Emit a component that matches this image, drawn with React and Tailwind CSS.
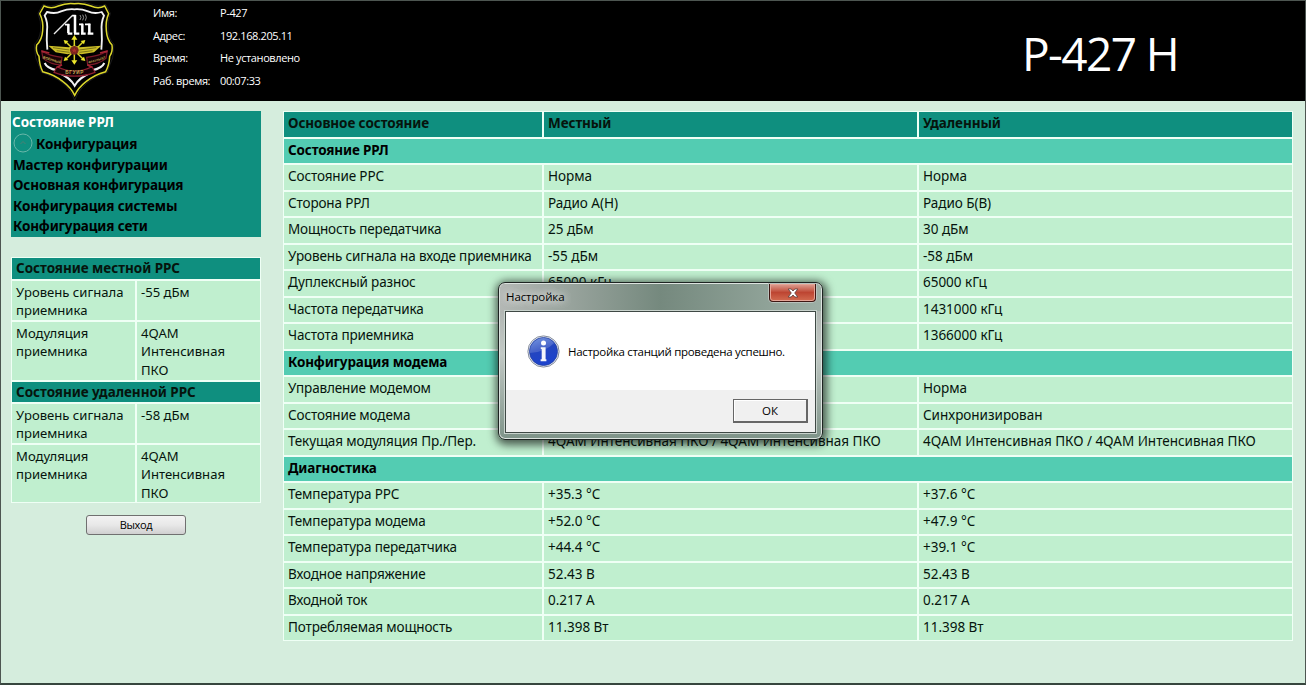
import React from "react";

const info = [
  ["Имя:", "Р-427"],
  ["Адрес:", "192.168.205.11"],
  ["Время:", "Не установлено"],
  ["Раб. время:", "00:07:33"],
];

const menu = ["Мастер конфигурации", "Основная конфигурация", "Конфигурация системы", "Конфигурация сети"];

const table = [
  { head: ["Основное состояние", "Местный", "Удаленный"] },
  { section: "Состояние РРЛ" },
  { cells: ["Состояние РРС", "Норма", "Норма"] },
  { cells: ["Сторона РРЛ", "Радио А(Н)", "Радио Б(В)"] },
  { cells: ["Мощность передатчика", "25 дБм", "30 дБм"] },
  { cells: ["Уровень сигнала на входе приемника", "-55 дБм", "-58 дБм"] },
  { cells: ["Дуплексный разнос", "65000 кГц", "65000 кГц"] },
  { cells: ["Частота передатчика", "1366000 кГц", "1431000 кГц"] },
  { cells: ["Частота приемника", "1431000 кГц", "1366000 кГц"] },
  { section: "Конфигурация модема" },
  { cells: ["Управление модемом", "Норма", "Норма"] },
  { cells: ["Состояние модема", "Синхронизирован", "Синхронизирован"] },
  { cells: ["Текущая модуляция Пр./Пер.", "4QAM Интенсивная ПКО / 4QAM Интенсивная ПКО", "4QAM Интенсивная ПКО / 4QAM Интенсивная ПКО"] },
  { section: "Диагностика" },
  { cells: ["Температура РРС", "+35.3 °C", "+37.6 °C"] },
  { cells: ["Температура модема", "+52.0 °C", "+47.9 °C"] },
  { cells: ["Температура передатчика", "+44.4 °C", "+39.1 °C"] },
  { cells: ["Входное напряжение", "52.43 В", "52.43 В"] },
  { cells: ["Входной ток", "0.217 А", "0.217 А"] },
  { cells: ["Потребляемая мощность", "11.398 Вт", "11.398 Вт"] },
];

function Emblem() {
  return (
    <svg className="h-[101px] w-[95px] shrink-0" viewBox="0 0 285 303" fill="none">
      <path d="M54 13 Q76 23 98 13 Q124 2 148 6 Q174 2 200 13 Q222 23 242 13 L256 40 Q247 62 249 92 Q252 120 267 133 L263 173 Q255 192 247 217 Q208 230 185 250 Q160 270 149 301 Q138 270 114 250 Q90 230 49 217 Q41 192 32 173 L28 133 Q43 120 47 92 Q49 62 39 40 Z" stroke="#2a2a2c" strokeWidth="2" />
      <path d="M57 18 Q79 28 100 18 Q124 8 148 11 Q174 8 198 18 Q220 28 239 18 L251 41 Q241 64 244 92 Q246 120 261 135 Q264 155 254 169 Q253 195 242 215 Q208 224 183 245 Q160 263 149 286 Q138 263 114 245 Q90 224 53 215 Q43 195 42 169 Q31 155 35 135 Q51 120 53 92 Q56 64 44 41 Z" stroke="#dcd72c" strokeWidth="4.5" />
      <path d="M67 149 Q64 122 66 92 Q69 67 59 47 L66 36 Q91 43 108 34 Q130 26 148 28 Q168 26 189 34 Q208 43 230 36 L237 47 Q228 67 230 92 Q232 122 229 149" stroke="#f2f2f2" strokeWidth="5.5" />
      <path d="M59 189 Q66 205 96 211 M238 189 Q231 205 201 211 M103 219 Q135 233 149 257 Q163 233 195 219" stroke="#f2f2f2" strokeWidth="6" />
      <path d="M87 102 L143 46" stroke="#e9e9e9" strokeWidth="4" />
      <path d="M130 99 V73 M150 99 V45 M172 99 V71 M193 99 V71" stroke="#fff" strokeWidth="7.5" />
      <path d="M120 74 H133 M142 47 H152 M162 73 H174 M180 73 H196" stroke="#fff" strokeWidth="5" />
      <path d="M128 101 H142 M147 101 H163 M168 101 H182 M188 101 H205" stroke="#fff" strokeWidth="7" />
      <path d="M165 45 Q171 52 165 60 M173 44 Q179 52 173 61 M181 43 Q187 52 181 62" stroke="#aaa" strokeWidth="2.5" />
      <path d="M70 137 L132 142 L148 136 L164 142 L229 137 L207 157 L169 163 L148 158 L128 163 L92 157 Z" fill="#cdbf27" />
      <path d="M84 143 L133 150 M95 152 L134 157 M214 143 L163 150 M203 152 L163 157" stroke="#504c10" strokeWidth="2" />
      <path d="M148 112 V188 M123 126 L174 177 M174 126 L123 177" stroke="#ddd526" strokeWidth="4.5" />
      <path d="M148 105 L157 119 H139 Z M148 194 L157 181 H139 Z M116 120 L130 123 L120 133 Z M181 120 L167 123 L177 133 Z M116 183 L130 180 L120 170 Z M181 183 L167 180 L177 170 Z" fill="#ece62c" />
      <circle cx="148" cy="151" r="13" fill="#7d2a22" />
      <path d="M148 140 L151 148 H160 L153 153 L156 161 L148 156 L140 161 L143 153 L136 148 H145 Z" fill="#a92f28" stroke="#4b120e" />
      <path d="M50 153 Q74 168 111 172 L108 195 Q75 193 54 175 Z M247 153 Q223 168 185 172 L188 195 Q222 193 243 175 Z" fill="#170306" stroke="#7c1b29" strokeWidth="3.5" />
      <path d="M96 200 Q149 226 201 200 L210 217 Q149 240 87 217 Z" fill="#170306" stroke="#8f2031" strokeWidth="3.5" />
      <path d="M50 153 L73 159 M247 153 L225 159 M111 194 L97 202 M187 194 L201 202" stroke="#a82534" strokeWidth="5" />
      <g fill="#c3b055" fontFamily="Liberation Sans, sans-serif" fontWeight="bold" textAnchor="middle">
        <text x="81" y="183" fontSize="10.5" transform="rotate(17 81 180)">ВОЕННЫЙ</text>
        <text x="216" y="183" fontSize="9" transform="rotate(-17 216 180)">ФАКУЛЬТЕТ</text>
        <text x="149" y="222" fontSize="14" letterSpacing="2">БГУИР</text>
      </g>
    </svg>
  );
}

function InfoIcon() {
  return (
    <svg className="size-[33px] shrink-0" viewBox="0 0 33 33">
      <defs>
        <linearGradient id="ball" x1="0" y1="0" x2="0.3" y2="1">
          <stop offset="0" stopColor="#5d84dc" />
          <stop offset="0.5" stopColor="#2446bf" />
          <stop offset="1" stopColor="#1d43cc" />
        </linearGradient>
      </defs>
      <circle cx="16.5" cy="16.5" r="15.6" fill="#e9ecf0" stroke="#838b9c" strokeWidth="1" />
      <circle cx="16.5" cy="16.5" r="14" fill="url(#ball)" stroke="#2541a2" strokeWidth="0.8" />
      <path d="M3 18 A13.5 13.5 0 0 1 27 8 Q19 17 3 18Z" fill="#fff" opacity="0.16" />
      <circle cx="16.5" cy="8" r="2.5" fill="#fff" />
      <path d="M13.8 12.2 H18.6 V24.2 H19.4 V26.2 H13.6 V24.2 H14.7 V14 H13.8 Z" fill="#f4f6fb" />
    </svg>
  );
}

function SideTable({ title, level }) {
  return (
    <>
      <div className="col-span-2 bg-[#0f8f7f] pl-1 text-[13.5px] leading-[21px] font-bold tracking-[-0.05px]">{title}</div>
      <div className="bg-[#c0efcf] pt-[2px] pl-1">Уровень сигнала приемника</div>
      <div className="bg-[#c0efcf] pt-[2px] pl-1">{level}</div>
      <div className="bg-[#c0efcf] pt-[2px] pl-1">Модуляция приемника</div>
      <div className="bg-[#c0efcf] pt-[2px] pr-4 pl-1">4QAM Интенсивная ПКО</div>
    </>
  );
}

function Row({ row }) {
  if (row.section) return <div className="col-span-3 bg-[#53ccb2] pl-1 font-bold tracking-[-0.15px] text-black">{row.section}</div>;
  if (row.head) return row.head.map((t) => <div key={t} className="bg-[#0f8f7f] pl-1 font-bold tracking-[-0.1px]">{t}</div>);
  const [label, ...values] = row.cells;
  return (
    <>
      <div className="bg-[#c0efcf] pl-1 tracking-[-0.14px]">{label}</div>
      {values.map((t, i) => <div key={i} className="bg-[#c0efcf] pl-1 tracking-[-0.02px]">{t}</div>)}
    </>
  );
}

function Dialog() {
  return (
    <div className="absolute top-[281px] left-[497px] flex h-[158px] w-[325px] flex-col rounded-[7px] border border-[#1e2422] bg-linear-to-b from-[#a6aaa7] via-[#c2c9c5] via-45% to-[#7f9489] px-[6px] pb-[6px] font-['Open_Sans','Noto_Sans',sans-serif] shadow-[inset_0_0_0_1px_#dce3df,1px_2px_9px_3px_rgba(0,0,0,0.62)]">
      <div className="mx-[-5px] mt-px flex h-[27px] shrink-0 justify-between rounded-t-[5px] bg-linear-to-r from-[#b4b8b5] via-[#75897e] via-50% to-[#9dafa5] pr-[5px] pl-[5px]">
        <div className="flex h-[25px] items-center rounded-full pl-px text-[11.5px] tracking-[-0.1px] text-black [text-shadow:0_0_8px_#fff,0_0_8px_#ddd]">Настройка</div>
        <button className="flex h-[18px] w-[47px] items-center justify-center rounded-b-[4px] border border-t-0 border-[#3e1612] bg-linear-to-b from-[#dda094] via-[#bd4532] via-50% to-[#d26b50] shadow-[inset_0_0_0_1px_#e5a496,0_0_0_1px_#b9c2bd]">
          <svg className="h-[10px] w-[12px]" viewBox="0 0 12 10">
            <path d="M1.2 1 H4.2 L6 3 L7.8 1 H10.8 L7.7 5 L10.8 9 H7.8 L6 7 L4.2 9 H1.2 L4.3 5 Z" fill="#fff" stroke="#573c3b" strokeWidth="0.8" />
          </svg>
        </button>
      </div>
      <div className="flex min-h-0 flex-1 flex-col border border-[#3f4945] bg-white shadow-[0_0_0_1px_#c9d3cd]">
        <div className="flex flex-1 items-center gap-[8px] pt-px pl-[21px]">
          <InfoIcon />
          <span className="text-[11.5px] tracking-[-0.31px] whitespace-nowrap text-black">Настройка станций проведена успешно.</span>
        </div>
        <div className="flex h-[42px] shrink-0 items-center justify-end bg-[#f0f0f0] pr-[7px]">
          <button className="h-[24px] w-[75px] border border-t-[#666] border-r-2 border-b-2 border-l-[#666] border-r-[#666] border-b-[#666] bg-[#f0f0f0] text-[11.5px] leading-[20px] text-black shadow-[inset_1px_1px_0_#fff]">ОК</button>
        </div>
      </div>
    </div>
  );
}

export default function App() {
  return (
    <div className="relative flex h-[685px] w-[1306px] flex-col overflow-hidden border border-b-2 border-[#4d5651] border-b-[#37463e] bg-[#d5eddd] font-['Noto_Sans','Open_Sans',sans-serif] text-[#06140d]">
      <header className="flex h-[100px] shrink-0 bg-black text-white">
        <div className="-mt-px ml-[24px] flex">
          <Emblem />
        </div>
        <div className="ml-[33px] grid h-[92px] grid-cols-[67px_auto] grid-rows-[repeat(4,22.6px)] items-center pt-px font-['Open_Sans','Noto_Sans',sans-serif] text-[11px] tracking-[-0.38px] whitespace-nowrap">
          {info.map(([k, v]) => (
            <React.Fragment key={k}>
              <span>{k}</span>
              <span>{v}</span>
            </React.Fragment>
          ))}
        </div>
        <div className="mr-[127px] ml-auto pt-[21px] font-['Open_Sans','Noto_Sans',sans-serif] text-[46px] leading-[62px] tracking-[-1.6px] whitespace-nowrap">Р-427 Н</div>
      </header>
      <div className="flex items-start gap-[22px] pt-[10px] pl-[10px]">
        <aside className="flex w-[250px] shrink-0 flex-col">
          <nav className="flex h-[126px] flex-col bg-[#0f8f7f] pl-[2px] text-[13.5px] leading-[20.6px] font-bold tracking-[-0.15px] whitespace-nowrap text-black">
            <div className="-ml-px h-[22px] leading-[22px] tracking-[-0.05px] text-white">Состояние РРЛ</div>
            <div className="flex h-[22.5px] items-center gap-1">
              <svg className="-mt-[2px] size-[20px] shrink-0" viewBox="0 0 20 20" fill="none">
                <circle cx="10" cy="10" r="9" stroke="#69b7a9" />
                <path d="M7.5 11 L10 8.5 L12.5 11" stroke="#4f7f73" />
              </svg>
              <span className="-ml-px pt-px">Конфигурация</span>
            </div>
            {menu.map((m) => <div key={m}>{m}</div>)}
          </nav>
          <div className="mt-[20px] grid grid-cols-[123px_123px] grid-rows-[21px_39px_57.5px_20.5px_39px_57px] gap-[2px] self-start border border-[#effff5] bg-[#effff5] text-[13.1px] leading-[18.3px]">
            <SideTable title="Состояние местной РРС" level="-55 дБм" />
            <SideTable title="Состояние удаленной РРС" level="-58 дБм" />
          </div>
          <button className="mt-[12px] ml-[75px] h-[20px] w-[100px] rounded-[3px] border border-[#707070] bg-linear-to-b from-[#f3f3f3] via-[#e8e8e8] via-50% to-[#d0d0d0] font-['Open_Sans','Noto_Sans',sans-serif] text-[11px] leading-[18px] tracking-[-0.4px] text-black">Выход</button>
        </aside>
        <main className="grid grid-cols-[258px_373px_373px] auto-rows-[24.5px] gap-[2px] border border-[#effff5] bg-[#effff5] text-[13.5px] leading-[23px] whitespace-nowrap">
          {table.map((row, i) => <Row key={i} row={row} />)}
        </main>
      </div>
      <Dialog />
    </div>
  );
}
